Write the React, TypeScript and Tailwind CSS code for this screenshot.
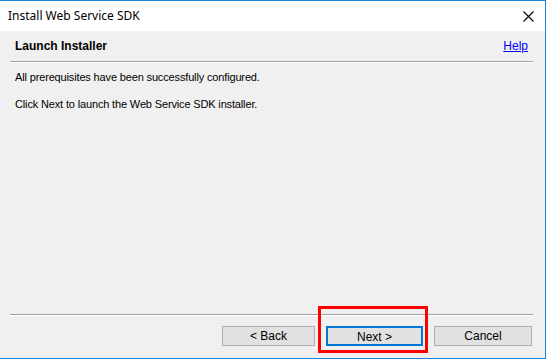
export default function App() {
  return (
    <div className="w-[548px] h-[360px] bg-white relative" style={{ fontFamily: '"Liberation Sans", Arial, sans-serif' }}>
      <div className="w-[546px] h-[359px] border border-l-0 border-[#1883d7] flex flex-col bg-[#f0f0f0]">
        {/* title bar */}
        <div className="h-[30px] bg-white flex items-center justify-between pl-[8px] pr-[10px] shrink-0">
          <span className="text-[12px] text-black" style={{ fontFamily: '"Noto Sans", sans-serif' }}>Install Web Service SDK</span>
          <svg width="11" height="11" viewBox="0 0 11 11" className="mr-[1px]">
            <path d="M0.5 0.5 L10.5 10.5 M10.5 0.5 L0.5 10.5" stroke="#000" strokeWidth="1.1" fill="none" />
          </svg>
        </div>
        {/* header */}
        <div className="flex items-center justify-between pl-[15px] pr-[17px] h-[30px] shrink-0">
          <span className="text-[12px] font-bold text-black">Launch Installer</span>
          <a className="text-[12px] text-[#0000ff] underline">Help</a>
        </div>
        <div className="ml-[10px] mr-[12px] h-[2px] border-t border-[#a0a0a0] border-b border-b-white shrink-0" />
        {/* body */}
        <div className="flex-1 pl-[15px] pt-[8px] text-[11px] text-black tracking-[-0.15px]">
          <p className="leading-[13px]">All prerequisites have been successfully configured.</p>
          <p className="leading-[13px] mt-[14px]">Click Next to launch the Web Service SDK installer.</p>
        </div>
        <div className="ml-[10px] mr-[12px] h-[2px] border-t border-[#a0a0a0] border-b border-b-white shrink-0" />
        {/* buttons */}
        <div className="flex justify-end items-start h-[42px] pr-[13px] gap-[11px] pt-[10px] shrink-0 text-[12px] text-black">
          <button className="w-[93px] h-[20px] bg-[#e1e1e1] border border-[#adadad]">&lt; Back</button>
          <button className="w-[97px] h-[20px] bg-[#e1e1e1] border-2 border-[#0078d7]">Next &gt;</button>
          <button className="w-[98px] h-[20px] bg-[#e1e1e1] border border-[#adadad]">Cancel</button>
        </div>
      </div>
      <div className="absolute left-[318px] top-[306px] w-[110px] h-[47px] border-[3px] border-[#ff0000]" />
    </div>
  )
}
